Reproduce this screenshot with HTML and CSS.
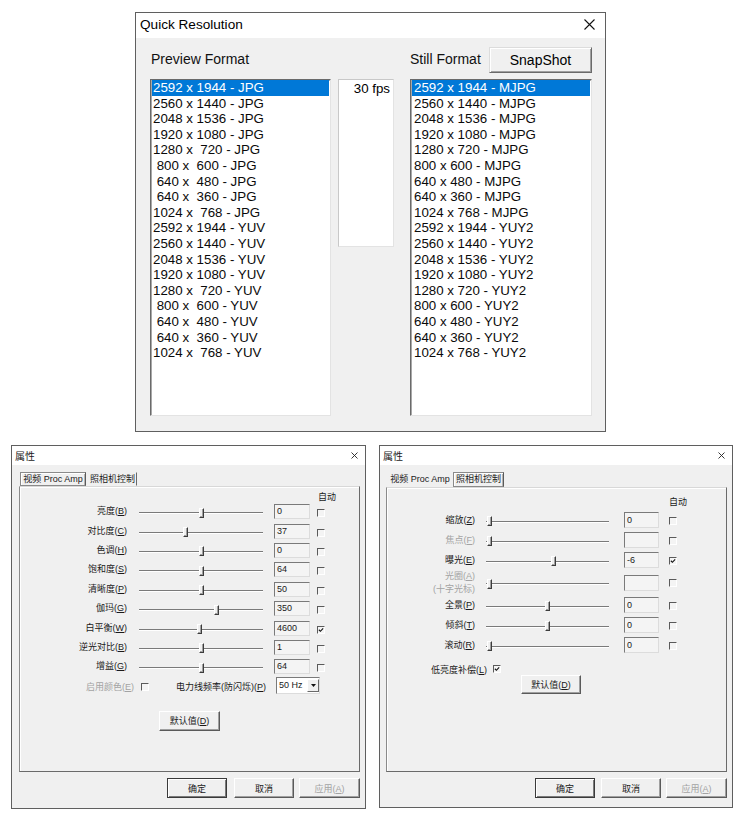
FILE: index.html
```html
<!DOCTYPE html>
<html lang="zh">
<head>
<meta charset="utf-8">
<title>Quick Resolution</title>
<link rel="stylesheet" href="styles.css">
</head>
<body>
<div class="win qr">
  <div class="qr-title">
    <span class="qr-title-text">Quick Resolution</span>
    <svg class="x-big" viewBox="0 0 11 11"><path d="M0.5 0.5L10.5 10.5M10.5 0.5L0.5 10.5"/></svg>
  </div>
  <div class="qr-body">
    <div class="col-preview">
      <div class="qr-head"><span class="qr-label lbl-preview">Preview Format</span></div>
      <div class="listbox">
        <div class="item sel">2592 x 1944 - JPG</div>
        <div class="item">2560 x 1440 - JPG</div>
        <div class="item">2048 x 1536 - JPG</div>
        <div class="item">1920 x 1080 - JPG</div>
        <div class="item">1280 x  720 - JPG</div>
        <div class="item"> 800 x  600 - JPG</div>
        <div class="item"> 640 x  480 - JPG</div>
        <div class="item"> 640 x  360 - JPG</div>
        <div class="item">1024 x  768 - JPG</div>
        <div class="item">2592 x 1944 - YUV</div>
        <div class="item">2560 x 1440 - YUV</div>
        <div class="item">2048 x 1536 - YUV</div>
        <div class="item">1920 x 1080 - YUV</div>
        <div class="item">1280 x  720 - YUV</div>
        <div class="item"> 800 x  600 - YUV</div>
        <div class="item"> 640 x  480 - YUV</div>
        <div class="item"> 640 x  360 - YUV</div>
        <div class="item">1024 x  768 - YUV</div>
      </div>
    </div>
    <div class="col-fps">
      <div class="qr-head"></div>
      <div class="fpsbox">30 fps</div>
    </div>
    <div class="col-still">
      <div class="qr-head"><span class="qr-label">Still Format</span><button class="snap">SnapShot</button></div>
      <div class="listbox lb-still">
        <div class="item sel">2592 x 1944 - MJPG</div>
        <div class="item">2560 x 1440 - MJPG</div>
        <div class="item">2048 x 1536 - MJPG</div>
        <div class="item">1920 x 1080 - MJPG</div>
        <div class="item">1280 x 720 - MJPG</div>
        <div class="item">800 x 600 - MJPG</div>
        <div class="item">640 x 480 - MJPG</div>
        <div class="item">640 x 360 - MJPG</div>
        <div class="item">1024 x 768 - MJPG</div>
        <div class="item">2592 x 1944 - YUY2</div>
        <div class="item">2560 x 1440 - YUY2</div>
        <div class="item">2048 x 1536 - YUY2</div>
        <div class="item">1920 x 1080 - YUY2</div>
        <div class="item">1280 x 720 - YUY2</div>
        <div class="item">800 x 600 - YUY2</div>
        <div class="item">640 x 480 - YUY2</div>
        <div class="item">640 x 360 - YUY2</div>
        <div class="item">1024 x 768 - YUY2</div>
      </div>
    </div>
  </div>
</div>

<div class="win prop prop-left">
  <div class="p-title">
    <span>属性</span>
    <svg class="x-small" viewBox="0 0 7 7"><path d="M0.5 0.5L6.5 6.5M6.5 0.5L0.5 6.5"/></svg>
  </div>
  <div class="p-body">
    <div class="tabs">
      <div class="tab tab-a sel">视频 Proc Amp</div>
      <div class="tab tab-b gap">照相机控制</div>
    </div>
    <div class="panel">
      <div class="auto-h auto-amp">自动</div>
      <div class="grid grid-amp">
        <div class="lbl">亮度(<u>B</u>)</div>
        <div class="slider"><span class="thumb" style="left:60px"></span></div>
        <div class="edit">0</div>
        <div class="chk"></div>

        <div class="lbl">对比度(<u>C</u>)</div>
        <div class="slider"><span class="thumb" style="left:44px"></span></div>
        <div class="edit">37</div>
        <div class="chk"></div>

        <div class="lbl">色调(<u>H</u>)</div>
        <div class="slider"><span class="thumb" style="left:60px"></span></div>
        <div class="edit">0</div>
        <div class="chk"></div>

        <div class="lbl">饱和度(<u>S</u>)</div>
        <div class="slider"><span class="thumb" style="left:60px"></span></div>
        <div class="edit">64</div>
        <div class="chk"></div>

        <div class="lbl">清晰度(<u>P</u>)</div>
        <div class="slider"><span class="thumb" style="left:60px"></span></div>
        <div class="edit">50</div>
        <div class="chk"></div>

        <div class="lbl">伽玛(<u>G</u>)</div>
        <div class="slider"><span class="thumb" style="left:75px"></span></div>
        <div class="edit">350</div>
        <div class="chk"></div>

        <div class="lbl">白平衡(<u>W</u>)</div>
        <div class="slider"><span class="thumb" style="left:58px"></span></div>
        <div class="edit">4600</div>
        <div class="chk on"><svg viewBox="0 0 7 7"><path d="M1 3.2L2.8 5L6 1.5"/></svg></div>

        <div class="lbl">逆光对比(<u>B</u>)</div>
        <div class="slider"><span class="thumb" style="left:60px"></span></div>
        <div class="edit">1</div>
        <div class="chk"></div>

        <div class="lbl">增益(<u>G</u>)</div>
        <div class="slider"><span class="thumb" style="left:60px"></span></div>
        <div class="edit">64</div>
        <div class="chk"></div>
      </div>
      <div class="extra">
        <div class="extra-l dis">启用颜色(<u>E</u>)</div>
        <div class="chk chk-inline"></div>
        <div class="extra-r">电力线频率(防闪烁)(<u>P</u>)</div>
        <div class="combo"><span class="combo-val">50 Hz</span><span class="combo-btn"><svg viewBox="0 0 5 3"><path d="M0 0H5L2.5 3Z"/></svg></span></div>
      </div>
      <button class="btn btn-dv dv-left">默认值(<u>D</u>)</button>
    </div>
    <div class="btnrow">
      <button class="btn def">确定</button>
      <button class="btn b-cancel">取消</button>
      <button class="btn dis b-apply">应用(<u>A</u>)</button>
    </div>
  </div>
</div>

<div class="win prop prop-right">
  <div class="p-title">
    <span>属性</span>
    <svg class="x-small" viewBox="0 0 7 7"><path d="M0.5 0.5L6.5 6.5M6.5 0.5L0.5 6.5"/></svg>
  </div>
  <div class="p-body">
    <div class="tabs">
      <div class="tab tab-a plain">视频 Proc Amp</div>
      <div class="tab tab-b sel">照相机控制</div>
    </div>
    <div class="panel panel-r">
      <div class="auto-h auto-cam">自动</div>
      <div class="grid grid-cam">
        <div class="lbl">缩放(<u>Z</u>)</div>
        <div class="slider"><span class="thumb" style="left:1px"></span></div>
        <div class="edit">0</div>
        <div class="chk"></div>

        <div class="lbl dis">焦点(<u>F</u>)</div>
        <div class="slider"><span class="thumb" style="left:1px"></span></div>
        <div class="edit"></div>
        <div class="chk"></div>

        <div class="lbl">曝光(<u>E</u>)</div>
        <div class="slider"><span class="thumb" style="left:65px"></span></div>
        <div class="edit">-6</div>
        <div class="chk on"><svg viewBox="0 0 7 7"><path d="M1 3.2L2.8 5L6 1.5"/></svg></div>

        <div class="lbl dis two">光圈(<u>A</u>)<br>(十字光标)</div>
        <div class="slider"><span class="thumb" style="left:1px"></span></div>
        <div class="edit"></div>
        <div class="chk"></div>

        <div class="lbl">全景(<u>P</u>)</div>
        <div class="slider"><span class="thumb" style="left:59px"></span></div>
        <div class="edit">0</div>
        <div class="chk"></div>

        <div class="lbl">倾斜(<u>T</u>)</div>
        <div class="slider"><span class="thumb" style="left:59px"></span></div>
        <div class="edit">0</div>
        <div class="chk"></div>

        <div class="lbl">滚动(<u>R</u>)</div>
        <div class="slider"><span class="thumb" style="left:1px"></span></div>
        <div class="edit">0</div>
        <div class="chk"></div>
      </div>
      <div class="lowlight">
        <span>低亮度补偿(<u>L</u>)</span>
        <div class="chk on chk-inline"><svg viewBox="0 0 7 7"><path d="M1 3.2L2.8 5L6 1.5"/></svg></div>
      </div>
      <button class="btn btn-dv dv-right">默认值(<u>D</u>)</button>
    </div>
    <div class="btnrow">
      <button class="btn def">确定</button>
      <button class="btn b-cancel">取消</button>
      <button class="btn dis b-apply">应用(<u>A</u>)</button>
    </div>
  </div>
</div>
</body>
</html>
```

FILE: styles.css
```css
* { box-sizing: border-box; }

html, body {
  margin: 0;
  padding: 0;
  background: #ffffff;
}

body {
  width: 752px;
  height: 827px;
  position: relative;
  overflow: hidden;
  font-family: "Liberation Sans", Arial, "Noto Sans CJK SC", sans-serif;
  color: #000;
}

.win {
  position: absolute;
  border: 1px solid #5f5f5f;
  background: #f0f0f0;
  display: flex;
  flex-direction: column;
}

/* ---------- Quick Resolution ---------- */
.qr {
  left: 135px;
  top: 12px;
  width: 471px;
  height: 420px;
}

.qr-title {
  height: 25px;
  background: #ffffff;
  display: flex;
  align-items: center;
  padding: 0 10px 2px 4px;
}

.qr-title-text {
  font-size: 13.6px;
  flex: 1;
}

.x-big {
  width: 11px;
  height: 11px;
  stroke: #111;
  stroke-width: 1.1;
  fill: none;
}

.qr-body {
  flex: 1;
  display: flex;
  align-items: flex-start;
  padding: 9px 13px 0 14px;
}

.qr-head {
  height: 26px;
  margin-bottom: 6px;
  display: flex;
  align-items: center;
}

.qr-label {
  font-size: 14px;
  color: #111;
  padding-bottom: 2px;
}

.lbl-preview { padding-left: 1px; }

.col-preview { width: 181px; }
.col-fps { width: 56px; margin-left: 7px; }
.col-still { width: 182px; margin-left: 16px; }

.snap {
  margin-left: auto;
  width: 103px;
  height: 26px;
  font-family: inherit;
  font-size: 14px;
  color: #000;
  background: #f0f0f0;
  border: 1px solid;
  border-color: #dcdcdc #6a6a6a #6a6a6a #dcdcdc;
  box-shadow: inset 1px 1px #ffffff, inset -1px -1px #a0a0a0;
  padding: 0;
}

.listbox {
  height: 337px;
  background: #ffffff;
  border: 1px solid;
  border-color: #6a6a6a #e3e3e3 #e3e3e3 #6a6a6a;
  box-shadow: inset 1px 1px #a8a8a8;
  padding: 0 1px 0 1px;
}

.item {
  height: 15.6px;
  line-height: 15.6px;
  font-size: 13.3px;
  white-space: pre;
  padding-left: 1px;
  color: #0a0a0a;
}

.lb-still .item { padding-left: 2px; }

.item.sel {
  background: #0078d7;
  color: #ffffff;
}

.fpsbox {
  height: 168px;
  background: #ffffff;
  border: 1px solid;
  border-color: #c8c8c8 #e3e3e3 #e3e3e3 #c8c8c8;
  text-align: right;
  font-size: 13.3px;
  line-height: 15.6px;
  padding: 1px 3px 0 0;
}

/* ---------- Property dialogs ---------- */
.prop {
  top: 445px;
  font-size: 9px;
  color: #1a1a1a;
}

.prop-left { left: 11px; width: 355px; height: 364px; }
.prop-right { left: 379px; width: 354px; height: 363px; }

.p-title {
  height: 19px;
  background: #ffffff;
  display: flex;
  align-items: center;
  padding: 0 7px 0 3px;
  font-size: 10px;
}

.p-title span { flex: 1; }

.x-small {
  width: 7px;
  height: 7px;
  stroke: #222;
  stroke-width: 0.9;
  fill: none;
}

.p-body {
  flex: 1;
  padding: 7px 5px 0 7px;
  display: flex;
  flex-direction: column;
}

.prop-right .p-body { padding-left: 6px; }

.tabs {
  display: flex;
  height: 14px;
  padding-left: 1px;
}

.tab {
  height: 14px;
  line-height: 12px;
  text-align: center;
  white-space: nowrap;
  border: 1px solid transparent;
}

.tab-a { width: 66px; }
.tab-b { width: 51px; }
.tab.gap { margin-left: 2px; width: 49px; border-right-color: #6a6a6a; }

.tab.sel {
  border-color: #8a8a8a #5a5a5a #8a8a8a #8a8a8a;
  box-shadow: inset 1px 1px #ffffff, inset -1px 0 #b4b4b4;
  background: #f0f0f0;
}

.prop-right .tabs { height: 15px; }
.prop-right .tab { height: 15px; line-height: 13px; }

.panel {
  height: 286px;
  border: 1px solid;
  border-color: #d8d8d8 #6a6a6a #6a6a6a #8a8a8a;
  box-shadow: inset 1px 1px #ffffff;
  display: flex;
  flex-direction: column;
  padding: 5px 0 0 0;
}

.panel-r {
  height: 285px;
  padding-top: 9px;
}

.auto-h {
  height: 10px;
  line-height: 10px;
  white-space: nowrap;
}

.auto-amp { margin-left: 298px; }
.auto-cam { margin-left: 282px; margin-bottom: 3px; }

.grid {
  display: grid;
  align-items: center;
}

.grid-amp {
  grid-template-columns: 107px 136px 47px 15px;
  grid-auto-rows: 19.4px;
}

.grid-cam {
  grid-template-columns: 88px 134px 50px 18px;
  grid-template-rows: 20px 20px 20px 25px 20px 20px 20px;
}

.lbl {
  grid-column: 1;
  text-align: right;
  white-space: nowrap;
  line-height: 11px;
}

.lbl.two { line-height: 12.5px; }

.dis { color: #a3a3a3; }

.slider {
  grid-column: 2;
  position: relative;
  height: 100%;
  margin-left: 12px;
}

.grid-cam .slider { margin-left: 11px; }

.slider::before {
  content: "";
  position: absolute;
  left: 0;
  right: 0;
  top: calc(50% + 0.5px);
  height: 1px;
  background: #7a7a7a;
}

.slider::after {
  content: "";
  position: absolute;
  left: 0;
  right: 0;
  top: calc(50% + 1.5px);
  height: 1px;
  background: #ffffff;
}

.thumb {
  position: absolute;
  z-index: 1;
  top: calc(50% - 4px);
  width: 5px;
  height: 10px;
  background: #f0f0f0;
  border-style: solid;
  border-width: 1px;
  border-color: #ffffff #3c3c3c #3c3c3c #ffffff;
  box-shadow: inset -1px -1px #a0a0a0;
}

.edit {
  grid-column: 3;
  margin-left: 11px;
  width: 36px;
  height: 15px;
  border: 1px solid;
  border-color: #7a7a7a #dcdcdc #dcdcdc #7a7a7a;
  background: #f4f4f4;
  line-height: 13px;
  padding-left: 2px;
}

.grid-cam .edit {
  margin-left: 15px;
  width: 35px;
  height: 16px;
  line-height: 14px;
}

.chk {
  grid-column: 4;
  margin-left: 7px;
  width: 8px;
  height: 8px;
  margin-top: 3px;
  border: 1px solid;
  border-color: #5a5a5a #ffffff #ffffff #5a5a5a;
  background: #f4f4f4;
  position: relative;
}

.grid-cam .chk { margin-left: 10px; margin-top: 1px; }

.chk svg {
  position: absolute;
  left: 0;
  top: 0;
  width: 6px;
  height: 6px;
  fill: none;
  stroke: #111;
  stroke-width: 1.3;
}

.chk-inline { margin: 0; }

.extra {
  display: flex;
  align-items: center;
  height: 19.4px;
}

.extra-l {
  width: 114px;
  text-align: right;
  white-space: nowrap;
}

.extra .chk-inline { margin-left: 7px; margin-top: 1px; }

.extra-r {
  width: 117px;
  text-align: right;
  white-space: nowrap;
}

.combo {
  margin-left: 10px;
  width: 44px;
  height: 17px;
  background: #ffffff;
  border: 1px solid;
  border-color: #7a7a7a #dcdcdc #dcdcdc #7a7a7a;
  display: flex;
  align-items: stretch;
  margin-top: -2px;
}

.combo-val {
  flex: 1;
  line-height: 14px;
  padding-left: 2px;
  white-space: nowrap;
}

.combo-btn {
  width: 12px;
  margin: 1px 0 1px 0;
  background: #f0f0f0;
  border: 1px solid;
  border-color: #ffffff #6a6a6a #6a6a6a #ffffff;
  display: flex;
  align-items: center;
  justify-content: center;
}

.combo-btn svg {
  width: 5px;
  height: 3px;
  fill: #111;
}

.btn {
  font-family: inherit;
  font-size: 9px;
  color: #1a1a1a;
  background: #f0f0f0;
  border: 1px solid;
  border-color: #ffffff #5a5a5a #5a5a5a #ffffff;
  box-shadow: inset -1px -1px #a0a0a0;
  padding: 0;
  height: 20px;
  width: 61px;
}

.btn.def {
  border-color: #3a3a3a;
  box-shadow: inset 1px 1px #ffffff, inset -1px -1px #7a7a7a;
}

.btn.dis { color: #a3a3a3; }

.btn-dv { align-self: flex-start; }

.dv-left { margin: 15px 0 0 139px; }

.dv-right {
  margin: 0 0 0 134px;
  width: 60px;
  height: 19px;
}

.lowlight {
  display: flex;
  align-items: center;
  height: 12px;
  margin: 8px 0 0 44px;
  white-space: nowrap;
}

.lowlight .chk-inline { margin-left: 6px; }

.btnrow {
  display: flex;
  justify-content: flex-end;
  margin-top: 6px;
}

.btnrow .btn { width: 60px; }
.btnrow .b-cancel { margin-left: 7px; }
.btnrow .b-apply { margin-left: 5px; width: 61px; }

.prop-right .btnrow .b-cancel { margin-left: 6px; }
.prop-right .btnrow .b-apply { margin-left: 5px; }
```
